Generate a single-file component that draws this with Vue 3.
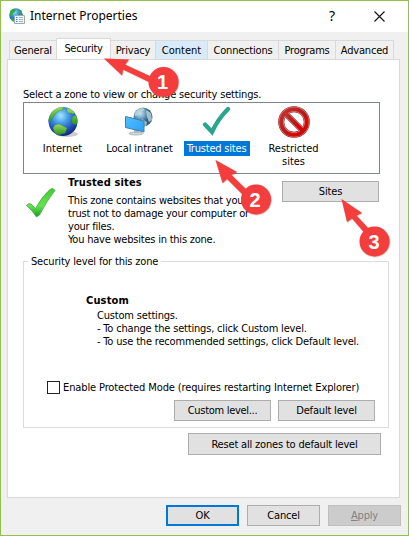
<script setup>
const tabs = [
  { name: 'General', cls: 'general' },
  { name: 'Security', cls: 'security active' },
  { name: 'Privacy', cls: 'privacy' },
  { name: 'Content', cls: 'content hover' },
  { name: 'Connections', cls: 'connections' },
  { name: 'Programs', cls: 'programs' },
  { name: 'Advanced', cls: 'advanced' },
]
</script>

<template>
  <div class="window">
    <header class="titlebar">
      <svg class="app-icon" viewBox="0 0 17 17">
        <defs>
          <radialGradient id="ball" cx=".4" cy=".3" r=".75">
            <stop offset="0" stop-color="#8fdcff" /><stop offset=".45" stop-color="#338fda" /><stop offset="1" stop-color="#123b96" />
          </radialGradient>
        </defs>
        <circle cx="7" cy="7" r="6.8" fill="url(#ball)" />
        <path d="M1 4Q3 0 7 1L6 4 4 5 3 8 1 8ZM9 1l4 3-1 4-2-2ZM2 10l3 1 1 3-3-1Z" fill="#35a54b" />
        <path d="M5.500 7.500h10v8h-10z" fill="#f3f6f8" stroke="#9ba9b5" />
        <path d="M7 9.500h1.500M7 11.500h1.500M7 13.500h1.500" stroke="#258bc7" /><path d="M10 9.500h4M10 11.500h4M10 13.500h4" stroke="#a6b4bd" />
      </svg>
      <h1>Internet Properties</h1>
      <span class="help">?</span>
      <svg class="close" viewBox="0 0 11 11"><path d="M.5.5l10 10M10.500 .5l-10 10" stroke="#111" stroke-width="1.100" /></svg>
    </header>

    <nav class="tabs">
      <div v-for="t in tabs" :key="t.name" class="tab" :class="t.cls"><span>{{ t.name }}</span></div>
    </nav>

    <main class="panel">
      <p class="prompt">Select a zone to view or change security settings.</p>
      <section class="zones">
        <div class="zone z1">
          <svg viewBox="0 0 32 32">
            <defs>
              <radialGradient id="globe" cx=".42" cy=".3" r=".72">
                <stop offset="0" stop-color="#a5e8ff" /><stop offset=".35" stop-color="#499ee8" /><stop offset=".7" stop-color="#2454bc" /><stop offset="1" stop-color="#102475" />
              </radialGradient>
              <linearGradient id="land" x2="0" y2="1"><stop stop-color="#a0da65" /><stop offset="1" stop-color="#24941d" /></linearGradient>
              <clipPath id="round"><circle cx="16" cy="15.500" r="14.500" /></clipPath>
            </defs>
            <ellipse cx="20" cy="28" rx="11" ry="3" fill="#999" opacity=".5" />
            <circle cx="16" cy="15.500" r="14.500" fill="url(#globe)" />
            <g clip-path="url(#round)" fill="url(#land)" stroke="#3f9138" stroke-width=".4">
              <path d="M1 15Q3 4 11 1L17 1 15 3 16 4 12 5 9 7 8 9 6 10 5 13 2 16Z" />
              <path d="M20 2l4 1 4 4-2 1-2-1-3 0-1-2ZM26 10l3-1 2 5-2 5-4-2 0-4Z" />
              <path d="M8 19l4-1 4 2 4 2-2 5-4 1-2 1-4-2-2-5Z" />
            </g>
          </svg>
          <span>Internet</span>
        </div>
        <div class="zone z2">
          <svg viewBox="0 0 32 32">
            <defs>
              <linearGradient id="screen" x2="1" y2="1"><stop stop-color="#4fc0ff" /><stop offset="1" stop-color="#2e9ff2" /></linearGradient>
              <radialGradient id="pale" cx=".35" cy=".3"><stop stop-color="#cce8f5" /><stop offset=".55" stop-color="#719fbe" /><stop offset="1" stop-color="#315d80" /></radialGradient>
            </defs>
            <circle cx="19" cy="11" r="9.500" fill="url(#pale)" />
            <path d="M11 7Q15 2 19 2l2 2-4 2-2 3-4 1ZM22 4l5 3 1 7-3 2-2-5ZM18 13l5 3-1 4-5-1Z" fill="#b9d8d6" opacity=".8" />
            <ellipse cx="12" cy="27.500" rx="7" ry="1.500" fill="#d2d8dc" stroke="#8a949c" stroke-width=".6" />
            <path d="M10 23l5 1v3h-5Z" fill="#aeb8bf" />
            <path d="M1.500 10.500L20 15v11L1.500 21.500Z" fill="url(#screen)" stroke="#3f7eac" />
          </svg>
          <span>Local intranet</span>
        </div>
        <div class="zone z3">
          <svg viewBox="0 0 32 32"><path d="M4 18.500l7 7.500Q17 13 27 3" fill="none" stroke="#2ca58d" stroke-width="4.300" stroke-linecap="round" /></svg>
          <span class="selected">Trusted sites</span>
        </div>
        <div class="zone z4">
          <svg viewBox="0 0 32 32">
            <defs><linearGradient id="ban" x2="1" y2="1"><stop stop-color="#c83232" /><stop offset=".55" stop-color="#b31919" /><stop offset=".7" stop-color="#dc0808" /><stop offset="1" stop-color="#bd0c0c" /></linearGradient></defs>
            <g fill="none" stroke="#8e1717" stroke-width="6"><circle cx="16" cy="16" r="12.800" /><path d="M7 7l18 18" /></g>
            <g fill="none" stroke="#e89a98" stroke-width="5"><circle cx="16" cy="16" r="12.800" /><path d="M7 7l18 18" /></g>
            <g fill="none" stroke="url(#ban)" stroke-width="4"><circle cx="16" cy="16" r="12.800" /><path d="M7 7l18 18" /></g>
          </svg>
          <span>Restricted</span><span class="second">sites</span>
        </div>
      </section>

      <section class="details">
        <svg class="green-check" viewBox="0 0 30 30">
          <defs><linearGradient id="check" x2="0" y2="1"><stop stop-color="#43c936" /><stop offset=".6" stop-color="#65e353" /><stop offset="1" stop-color="#189d20" /></linearGradient></defs>
          <path d="M.5 17.500q2-3 4.500-1.500l4.500 4.500Q16 8 24.500 1q3-1.500 4.500 1.500-8 10-15.500 24.500l-3 2Q6 22 .5 17.500Z" fill="url(#check)" stroke="#3ba536" stroke-width=".7" />
        </svg>
        <div class="description">
          <h2>Trusted sites</h2>
          <p>This zone contains websites that you</p>
          <p>trust not to damage your computer or</p>
          <p>your files.</p>
          <p>You have websites in this zone.</p>
        </div>
        <button class="sites">Sites</button>
      </section>

      <section class="group">
        <span class="legend">Security level for this zone</span>
        <div class="custom">
          <h2>Custom</h2>
          <p>Custom settings.</p>
          <p>- To change the settings, click Custom level.</p>
          <p>- To use the recommended settings, click Default level.</p>
        </div>
        <label class="protected"><i class="box"></i><span>Enable Protected Mode (requires restarting Internet Explorer)</span></label>
        <div class="level-buttons"><button class="custom-level">Custom level...</button><button>Default level</button></div>
      </section>
      <button class="reset">Reset all zones to default level</button>
    </main>

    <footer class="actions">
      <button class="ok">OK</button><button>Cancel</button><button class="apply"><u>A</u>pply</button>
    </footer>

    <svg class="callouts" viewBox="0 0 409 536">
      <defs><filter id="shade"><feDropShadow dx=".5" dy=".5" stdDeviation=".5" flood-color="#632" flood-opacity=".5" /></filter></defs>
      <g filter="url(#shade)" fill="#f43e3e">
        <path d="M104 58.500L129 59.500 125 64.500 152 77 149 82 123 69.500 122 75.500Z" /><circle cx="163.500" cy="82" r="15" />
        <path d="M215.500 160L237 172 231.500 175 247 190 243 195 227 179 222.500 183Z" /><circle cx="256" cy="199.500" r="15" />
        <path d="M341.500 199L362 213 356.500 215.500 369 229 364.500 233 352 218.500 347 222Z" /><circle cx="374.500" cy="241.500" r="15" />
      </g>
      <g class="numbers"><text x="162.500" y="88.500">1</text><text x="255" y="206.500">2</text><text x="374" y="248.500">3</text></g>
    </svg>
  </div>
</template>

<style>
body { margin: 0; overflow: hidden; }
</style>
<style scoped>
* { box-sizing: border-box; }
h1, h2, p { margin: 0; }
.window { position: relative; width: 409px; height: 536px; border: 1px solid #92c14b; background: #f0f0f0; color: #000; font: 11px/13px "DejaVu Sans Condensed", "DejaVu Sans", sans-serif; font-stretch: condensed; letter-spacing: -.17px; white-space: nowrap; overflow: hidden; display: flex; flex-direction: column; }
.titlebar { height: 31px; background: #fff; display: flex; align-items: center; padding: 0 0 1px 8px; flex: none; }
.app-icon { width: 17px; height: 17px; }
h1 { font: 12px/20px "Noto Sans", sans-serif; letter-spacing: 0; margin-left: 4px; width: 109px; }
.help { font: 14px/20px "Noto Sans", sans-serif; margin-left: 190px; width: 8px; }
.close { width: 11px; height: 11px; margin-left: 37px; }
.tabs { height: 27px; flex: none; padding-left: 8px; display: flex; align-items: flex-end; }
.tab { height: 19px; border: 1px solid #d9d9d9; border-left-width: 0; border-bottom: 0; padding: 3px 0 0; display: flex; justify-content: center; }
.tab.active { height: 21px; background: #fff; border-left-width: 1px; margin-left: -1px; }
.hover { background: #d9ebf9; }
.general { width: 48px; border-left-width: 1px; }
.security { width: 55px; letter-spacing: -.3px; }
.privacy { width: 45px; }
.content { width: 52px; letter-spacing: 0; }
.connections { width: 71px; letter-spacing: -.2px; }
.programs { width: 57px; letter-spacing: -.25px; }
.advanced { width: 58px; letter-spacing: -.2px; }
.panel { margin-left: 6px; width: 393px; height: 439px; flex: none; border: 1px solid #d9d9d9; background: #fff; padding: 28px 0 0 15px; display: flex; flex-direction: column; align-items: flex-start; }
.prompt { height: 14px; }
.zones { width: 357px; height: 72px; border: 1px solid #7f8590; display: flex; padding-top: 3px; }
.zone { width: 77px; display: flex; flex-direction: column; align-items: center; letter-spacing: 0; }
.zone svg { width: 32px; height: 32px; margin-bottom: 3px; }
.zone span { height: 15px; line-height: 15px; }
.z2 { letter-spacing: -.1px; }
.z3 { letter-spacing: -.2px; }
.zone .second { line-height: 13px; margin-top: -1px; }
.zone .selected { background: #0078d7; color: #fff; width: 66px; text-align: center; }
.details { display: flex; height: 87px; width: 372px; align-items: flex-start; }
.green-check { width: 30px; height: 30px; margin: 14px 0 0 3px; }
.description { width: 214px; margin: 1px 0 0 12px; letter-spacing: -.22px; }
h2 { font-size: 11px; line-height: 13px; letter-spacing: .15px; }
.description h2 { margin-bottom: 4px; line-height: 15px; }
button { font: inherit; letter-spacing: -.18px; padding: 0; color: #000; background: #e1e1e1; border: 1px solid #adadad; height: 21px; white-space: nowrap; }
.sites { width: 97px; margin-top: 7px; }
.group { width: 366px; height: 167px; border: 1px solid #dcdcdc; display: flex; flex-direction: column; align-items: flex-start; }
.legend { margin: -7px 0 0 4px; background: #fff; padding: 0 3px; height: 13px; }
.custom { margin: 26px 0 0 62px; }
.custom h2 { margin-bottom: 2px; }
.custom p { margin-left: 11px; letter-spacing: -.18px; }
.protected { display: flex; align-items: center; height: 13px; margin: 33px 0 0 23px; letter-spacing: -.12px; }
.box { width: 13px; height: 13px; border: 1px solid #222; margin-right: 3px; }
.level-buttons { display: flex; gap: 7px; margin: 6px 0 0 150px; }
.level-buttons button { width: 97px; }
.level-buttons .custom-level { letter-spacing: -.3px; }
.reset { width: 193px; height: 22px; margin: 5px 0 0 165px; }
.actions { display: flex; gap: 8px; margin: 7px 0 0 165px; }
.actions button { width: 73px; }
.actions .ok { border: 2px solid #0078d7; }
.actions .apply { background: #ccc; border-color: #bfbfbf; color: #838383; }
.callouts { position: absolute; left: -1px; top: -1px; width: 409px; height: 536px; pointer-events: none; }
.numbers { font: bold 20px "Liberation Sans", sans-serif; letter-spacing: 0; fill: #fff; text-anchor: middle; }
</style>
